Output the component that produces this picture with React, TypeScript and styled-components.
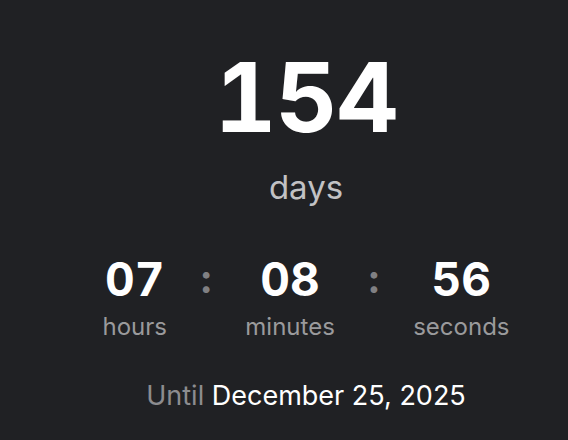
import React from "react";
import styled, { createGlobalStyle } from "styled-components";

const Global = createGlobalStyle`
  html, body { margin: 0; padding: 0; background: #202124; }
  body { font-family: Inter, "Noto Sans", sans-serif; -webkit-font-smoothing: antialiased; }
`;

const Page = styled.main`
  width: 568px;
  height: 440px;
  box-sizing: border-box;
  padding: 49px 0 0 44px;
  background: #202124;
  display: flex;
  flex-direction: column;
  align-items: center;
  overflow: hidden;
`;

const Days = styled.div`
  font-size: 96px;
  font-weight: 700;
  line-height: 96px;
  color: #ffffff;
  letter-spacing: -1px;
  font-variant-numeric: tabular-nums;
`;

const DaysLabel = styled.div`
  margin-top: 23px;
  font-size: 33px;
  line-height: 38px;
  color: #c2c2c4;
`;

const Row = styled.div`
  margin-top: 48px;
  display: flex;
  align-items: flex-start;
  gap: 32.5px;
`;

const Unit = styled.div`
  display: flex;
  flex-direction: column;
  align-items: center;
`;

const Value = styled.div`
  font-size: 46px;
  font-weight: 700;
  line-height: 50px;
  color: #ffffff;
  font-variant-numeric: tabular-nums;
`;

const Label = styled.div`
  margin-top: 9px;
  font-size: 24px;
  line-height: 28px;
  color: #9a9a9c;
`;

const Colon = styled.div`
  font-size: 40px;
  font-weight: 700;
  line-height: 50px;
  color: #808083;
`;

const Until = styled.div`
  margin-top: 39px;
  font-size: 27px;
  line-height: 32px;
  color: #8c8c8f;
`;

const DateText = styled.span`
  color: #ffffff;
  font-weight: 400;
`;

const units = [
  { value: "07", label: "hours" },
  { value: "08", label: "minutes" },
  { value: "56", label: "seconds" },
];

export default function App() {
  return (
    <>
      <Global />
      <Page>
        <Days>154</Days>
        <DaysLabel>days</DaysLabel>
        <Row>
          {units.map((u, i) => (
            <React.Fragment key={u.label}>
              {i > 0 && <Colon>:</Colon>}
              <Unit>
                <Value>{u.value}</Value>
                <Label>{u.label}</Label>
              </Unit>
            </React.Fragment>
          ))}
        </Row>
        <Until>
          Until <DateText>December 25, 2025</DateText>
        </Until>
      </Page>
    </>
  );
}
